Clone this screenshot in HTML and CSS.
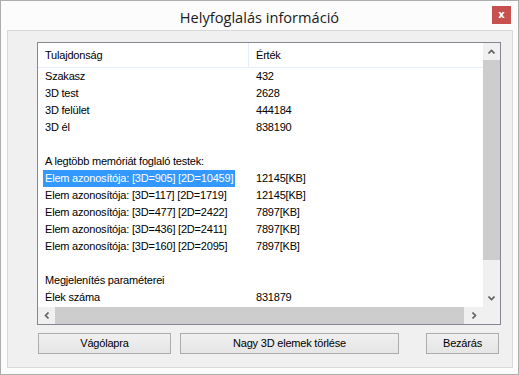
FILE: index.html
```html
<!DOCTYPE html>
<html>
<head>
  <meta charset="UTF-8">
  <title>Helyfoglalás információ</title>
  <link rel="stylesheet" href="styles.css">
</head>
<body>
  <div class="window">
    <div class="titlebar">
      <div class="title">Helyfoglalás információ</div>
      <div class="close">x</div>
    </div>

    <div class="client">
      <div class="list">
        <div class="content">
          <div class="head">
            <div class="cell c1">Tulajdonság</div>
            <div class="cell c2">Érték</div>
          </div>
          <div class="row"><div class="cell c1">Szakasz</div><div class="cell c2">432</div></div>
          <div class="row"><div class="cell c1">3D test</div><div class="cell c2">2628</div></div>
          <div class="row"><div class="cell c1">3D felület</div><div class="cell c2">444184</div></div>
          <div class="row"><div class="cell c1">3D él</div><div class="cell c2">838190</div></div>
          <div class="row"></div>
          <div class="row"><div class="cell c1">A legtöbb memóriát foglaló testek:</div></div>
          <div class="row"><div class="cell c1"><span class="sel">Elem azonosítója: [3D=905] [2D=10459]</span></div><div class="cell c2">12145[KB]</div></div>
          <div class="row"><div class="cell c1">Elem azonosítója: [3D=117] [2D=1719]</div><div class="cell c2">12145[KB]</div></div>
          <div class="row"><div class="cell c1">Elem azonosítója: [3D=477] [2D=2422]</div><div class="cell c2">7897[KB]</div></div>
          <div class="row"><div class="cell c1">Elem azonosítója: [3D=436] [2D=2411]</div><div class="cell c2">7897[KB]</div></div>
          <div class="row"><div class="cell c1">Elem azonosítója: [3D=160] [2D=2095]</div><div class="cell c2">7897[KB]</div></div>
          <div class="row"></div>
          <div class="row"><div class="cell c1">Megjelenítés paraméterei</div></div>
          <div class="row"><div class="cell c1">Élek száma</div><div class="cell c2">831879</div></div>
        </div>

        <div class="vscroll">
          <div class="btn">
            <svg width="7" height="5" viewBox="0 0 7 5"><path d="M0.5 4.5 L3.5 1.5 L6.5 4.5" fill="none" stroke="#606060" stroke-width="1.6"/></svg>
          </div>
          <div class="vthumb"></div>
          <div class="vtrack"></div>
          <div class="btn">
            <svg width="7" height="5" viewBox="0 0 7 5"><path d="M0.5 0.5 L3.5 3.5 L6.5 0.5" fill="none" stroke="#606060" stroke-width="1.6"/></svg>
          </div>
        </div>

        <div class="hscroll">
          <div class="btn">
            <svg width="5" height="7" viewBox="0 0 5 7"><path d="M4.5 0.5 L1.5 3.5 L4.5 6.5" fill="none" stroke="#606060" stroke-width="1.6"/></svg>
          </div>
          <div class="hthumb"></div>
          <div class="btn">
            <svg width="5" height="7" viewBox="0 0 5 7"><path d="M0.5 0.5 L3.5 3.5 L0.5 6.5" fill="none" stroke="#606060" stroke-width="1.6"/></svg>
          </div>
        </div>

        <div class="corner"></div>
      </div>

      <div class="buttons">
        <div class="button b-copy">Vágólapra</div>
        <div class="button b-del">Nagy 3D elemek törlése</div>
        <div class="button b-close">Bezárás</div>
      </div>
    </div>
  </div>
</body>
</html>
```

FILE: styles.css
```css
body {
  margin: 0;
  font-family: "Liberation Sans", Arial, sans-serif;
  font-size: 11px;
  letter-spacing: -0.2px;
  color: #000;
}

.window {
  width: 517px;
  height: 373px;
  border: 1px solid #adadad;
  background: #fcfcfc;
  display: flex;
  flex-direction: column;
}

.titlebar {
  height: 29px;
  display: flex;
  align-items: flex-start;
  justify-content: center;
  position: relative;
}

.title {
  font-family: "Open Sans", "Noto Sans", sans-serif;
  font-size: 14.6px;
  letter-spacing: 0;
  line-height: 20px;
  margin-top: 6px;
  color: #1a1a1a;
}

.close {
  position: absolute;
  top: 5px;
  right: 7px;
  width: 19px;
  height: 18px;
  background: #c75050;
  color: #fff;
  font-family: "DejaVu Sans", sans-serif;
  font-weight: bold;
  font-size: 10px;
  letter-spacing: 0;
  line-height: 17px;
  text-align: center;
}

.client {
  flex: 1;
  margin: 0 5px 6px 6px;
  border: 1px solid #d9d9d9;
  background: #f0f0f0;
  padding: 11px 11px 12px 29px;
  display: flex;
  flex-direction: column;
}

.list {
  height: 281px;
  border: 1px solid #828790;
  background: #fff;
  display: grid;
  grid-template-columns: 1fr 17px;
  grid-template-rows: 1fr 17px;
}

.content {
  overflow: hidden;
}

.head {
  height: 24px;
  display: flex;
  border-bottom: 1px solid #e5eef9;
  line-height: 24px;
}

.head .c1 {
  border-right: 1px solid #e5eef9;
  width: 203px;
}

.row {
  height: 17px;
  line-height: 17px;
  display: flex;
  white-space: nowrap;
}

.cell {
  padding-left: 7px;
}

.c1 {
  width: 204px;
}

.sel {
  background: #3399ff;
  color: #fff;
  margin-left: -2px;
  padding: 0 2px;
  display: inline-block;
}

.vscroll {
  background: #f0f0f0;
  display: flex;
  flex-direction: column;
}

.vscroll .btn {
  height: 17px;
}

.btn {
  display: flex;
  align-items: center;
  justify-content: center;
}

.vthumb {
  height: 200px;
  background: #cdcdcd;
}

.vtrack {
  flex: 1;
}

.hscroll {
  background: #f0f0f0;
  display: flex;
}

.hscroll .btn {
  width: 17px;
}

.hthumb {
  width: 409px;
  margin-right: auto;
  background: #cdcdcd;
}

.corner {
  background: #f0f0f0;
}

.buttons {
  display: flex;
  margin-top: 8px;
  margin-left: 1px;
  margin-right: 2px;
}

.button {
  height: 19px;
  line-height: 19px;
  text-align: center;
  border: 1px solid #acacac;
  background: linear-gradient(#f0f0f0, #e5e5e5);
}

.b-copy {
  width: 131px;
}

.b-del {
  width: 217px;
  margin-left: 9px;
}

.b-close {
  width: 71px;
  margin-left: auto;
}
```
